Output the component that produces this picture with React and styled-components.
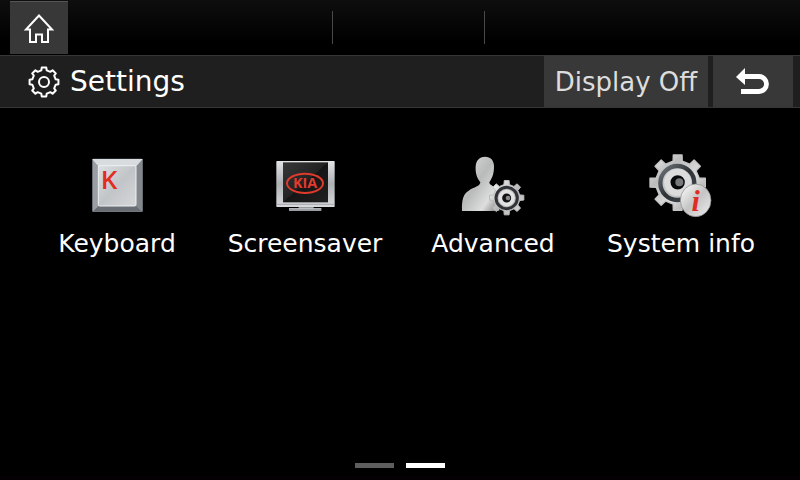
import React from "react";
import styled, { createGlobalStyle } from "styled-components";

const GlobalStyle = createGlobalStyle`
  * { box-sizing: border-box; }
  body { margin: 0; background: #000; color: #fff; font-family: "DejaVu Sans", sans-serif; }
  button { font: inherit; color: inherit; padding: 0; border: 0; }
  svg { overflow: visible; }
`;

const Screen = styled.div`
  display: flex;
  flex-direction: column;
  min-height: 100vh;
  padding-bottom: 8px;
  background: #000;
  border-bottom: 4px solid #040004;
`;

const StatusBar = styled.nav`
  display: grid;
  grid-template-columns: 322fr 152fr 316fr;
  height: 55px;
  padding: 1px 0 1px 10px;
  background: linear-gradient(#0e0e0e, #000 75%);
`;

const StatusSlot = styled.div`
  margin: 10px 0;
  border-left: 1px solid #484848;
`;

const HomeButton = styled.button`
  display: flex;
  align-items: center;
  justify-content: center;
  width: 58px;
  height: 53px;
  background: #383838;
  border-top: 1px solid #555;
`;

const Header = styled.header`
  display: flex;
  align-items: stretch;
  gap: 5px;
  height: 53px;
  padding-right: 7px;
  background: #1f1f1f;
  border-top: 1px solid #363636;
  border-bottom: 1px solid #363636;
`;

const Title = styled.h1`
  display: flex;
  flex: 1;
  align-items: center;
  gap: 10px;
  margin: 0;
  padding-left: 28px;
  font-size: 28px;
  line-height: 32px;
  font-weight: 400;
`;

const HeaderButton = styled.button`
  display: flex;
  align-items: center;
  justify-content: center;
  width: ${(p) => p.$width}px;
  background: #383838;
  color: #ddd;
  font-size: 26px;
  font-weight: 400;
  white-space: nowrap;
`;

const Menu = styled.main`
  display: grid;
  flex: 1;
  grid-template-columns: repeat(4, 1fr);
  align-items: start;
  padding: 45px 25px 0 23px;
`;

const MenuItem = styled.button`
  display: flex;
  flex-direction: column;
  align-items: center;
  gap: 10px;
  background: none;
  font-size: 25px;
  line-height: 32px;
  font-weight: 400;
  white-space: nowrap;
`;

const Pager = styled.div`
  display: flex;
  justify-content: center;
  gap: 12px;
`;

const PageMark = styled.button`
  width: 39px;
  height: 5px;
  background: ${(p) => (p.$active ? "#fff" : "#5e5e5e")};
`;

const gearPath = (cx, cy, outer, root, tip, base) => {
  const points = [];
  for (let i = 0; i < 8; i += 1) {
    [[-base, root], [-tip, outer], [tip, outer], [base, root]].forEach(([offset, r]) => {
      const a = ((i * 45 + offset - 90) * Math.PI) / 180;
      points.push(`${(cx + r * Math.cos(a)).toFixed(2)} ${(cy + r * Math.sin(a)).toFixed(2)}`);
    });
  }
  return `M${points.join("L")}Z`;
};

const HomeIcon = () => (
  <svg width="32" height="32" viewBox="0 0 32 32" fill="none" stroke="#fff" strokeWidth="2" aria-hidden="true">
    <path d="M16 3.5 L3 17.5 H7 V30 H13 V22.5 H19 V30 H25 V17.5 H29 Z" />
  </svg>
);

const SettingsIcon = () => (
  <svg width="32" height="34" viewBox="0 0 32 34" fill="none" stroke="#fff" strokeWidth="2" strokeLinejoin="round" aria-hidden="true">
    <path d={gearPath(16, 17, 14.6, 12, 9, 13)} />
    <circle cx="16" cy="17" r="5" />
  </svg>
);

const BackIcon = () => (
  <svg width="34" height="30" viewBox="0 0 34 30" aria-hidden="true">
    <path d="M0 10 L9 1 V18 Z" fill="#fff" />
    <path d="M7 9.5 H23 a7.5 7.5 0 0 1 0 15 H5" fill="none" stroke="#fff" strokeWidth="4.8" />
  </svg>
);

const KeyboardIcon = () => (
  <svg width="64" height="65" viewBox="15 24 192 195" aria-hidden="true">
    <defs>
      <linearGradient id="keyFace" x1="0" y1="0" x2="1" y2="1">
        <stop offset="0" stopColor="#dde0e3" />
        <stop offset="0.5" stopColor="#c2c5c8" />
        <stop offset="1" stopColor="#d5d6d8" />
      </linearGradient>
    </defs>
    <rect x="37" y="41" width="151" height="160" rx="4" fill="#898e94" />
    <path d="M38 42 H187 L167 64 H57 Z" fill="#d9dcdf" />
    <path d="M38 42 L57 64 V182 L38 200 Z" fill="#9a9fa5" />
    <path d="M187 42 V200 L167 182 V64 Z" fill="#83888e" />
    <path d="M38 200 L57 182 H167 L187 200 Z" fill="#696e74" />
    <rect x="55" y="62" width="113" height="121" rx="4" fill="url(#keyFace)" stroke="#eef0f2" strokeWidth="3" />
    <path d="M38 42 L57 64 M187 42 L167 64" stroke="#fff" strokeWidth="2" />
    <text x="62" y="132" fontFamily="Open Sans, sans-serif" fontSize="78" fontWeight="600" fill="#e32c20">K</text>
  </svg>
);

const ScreensaverIcon = () => (
  <svg width="64" height="65" viewBox="15 9 192 195" aria-hidden="true">
    <defs>
      <linearGradient id="bezel" x1="0" y1="0" x2="0" y2="1">
        <stop offset="0" stopColor="#e2e4e6" />
        <stop offset="0.5" stopColor="#aeb1b4" />
        <stop offset="1" stopColor="#d8dadc" />
      </linearGradient>
      <linearGradient id="panel" x1="0" y1="0" x2="1" y2="1">
        <stop offset="0" stopColor="#383838" />
        <stop offset="0.5" stopColor="#222" />
        <stop offset="0.5" stopColor="#151515" />
        <stop offset="1" stopColor="#202020" />
      </linearGradient>
    </defs>
    <path d="M92 170 H137 V175 H160 V183 H63 V175 H92 Z" fill="#989ca0" />
    <path d="M63 176 H160" stroke="#dfe1e3" strokeWidth="2" />
    <rect x="25" y="33" width="175" height="138" rx="2" fill="url(#bezel)" />
    <path d="M27 163 H198" stroke="#a5a8ac" strokeWidth="3" />
    <rect x="45" y="37" width="135" height="120" fill="url(#panel)" />
    <ellipse cx="111" cy="100" rx="54" ry="29" fill="none" stroke="#df3a2c" strokeWidth="6" />
    <text x="111" y="115" textAnchor="middle" fontFamily="Open Sans, sans-serif" fontSize="43" fontWeight="700" fill="#e23b2d">KIA</text>
  </svg>
);

const AdvancedIcon = () => (
  <svg width="64" height="65" viewBox="18 9 192 195" aria-hidden="true">
    <defs>
      <linearGradient id="person" x1="0" y1="0" x2="1" y2="1">
        <stop offset="0" stopColor="#dedfdf" />
        <stop offset="0.45" stopColor="#b9bbbb" />
        <stop offset="0.75" stopColor="#dddede" />
        <stop offset="1" stopColor="#777" />
      </linearGradient>
      <linearGradient id="smallGear" x1="0" y1="0" x2="1" y2="1">
        <stop offset="0" stopColor="#fff" />
        <stop offset="0.55" stopColor="#b5b5b5" />
        <stop offset="1" stopColor="#ddd" />
      </linearGradient>
    </defs>
    <path d="M21 183 C20 145 26 132 41 122 C57 111 76 109 76 97 C63 81 61 63 62 48 C64 28 76 20 90 20 C107 20 117 31 117 49 C117 67 114 81 103 97 C103 107 122 111 133 119 V183 Z" fill="url(#person)" />
    <path d={gearPath(155, 143, 52, 40, 8, 12)} fill="url(#smallGear)" stroke="#bbb" strokeWidth="3" strokeLinejoin="round" />
    <circle cx="155" cy="144" r="32" fill="#b9b9b9" stroke="#303438" strokeWidth="9" />
    <circle cx="155" cy="144" r="19" fill="#101214" stroke="#e2e2e2" strokeWidth="11" />
    <circle cx="159" cy="144" r="7" fill="#8a8a8a" />
  </svg>
);

const SystemInfoIcon = () => (
  <svg width="64" height="65" viewBox="18 15 192 195" aria-hidden="true">
    <defs>
      <linearGradient id="largeGear" x1="0" y1="0" x2="1" y2="1">
        <stop offset="0" stopColor="#f0f0f0" />
        <stop offset="0.3" stopColor="#bcbcbc" />
        <stop offset="0.6" stopColor="#ddd" />
        <stop offset="1" stopColor="#888" />
      </linearGradient>
      <linearGradient id="ring" x1="0" y1="0" x2="1" y2="1">
        <stop offset="0" stopColor="#70767b" />
        <stop offset="0.5" stopColor="#2e3338" />
        <stop offset="1" stopColor="#43484c" />
      </linearGradient>
      <linearGradient id="badge" x1="0" y1="0" x2="1" y2="1">
        <stop offset="0" stopColor="#fff" />
        <stop offset="0.5" stopColor="#c4c4c4" />
        <stop offset="1" stopColor="#eee" />
      </linearGradient>
    </defs>
    <path d={gearPath(104, 104, 84, 66, 9, 12)} fill="url(#largeGear)" stroke="#c5c5c5" strokeWidth="4" strokeLinejoin="round" />
    <circle cx="103" cy="105" r="51" fill="#c5c5c5" stroke="url(#ring)" strokeWidth="13" />
    <circle cx="104" cy="103" r="31" fill="#08090a" stroke="#dcdcdc" strokeWidth="19" />
    <circle cx="109" cy="103" r="12" fill="#77797b" />
    <ellipse cx="158" cy="157" rx="46" ry="49" fill="url(#badge)" stroke="#858585" strokeWidth="2" />
    <text x="158" y="188" textAnchor="middle" fontFamily="Liberation Serif, serif" fontSize="90" fontStyle="italic" fontWeight="700" fill="#df2c25">i</text>
  </svg>
);

const items = [
  { label: "Keyboard", Icon: KeyboardIcon },
  { label: "Screensaver", Icon: ScreensaverIcon },
  { label: "Advanced", Icon: AdvancedIcon },
  { label: "System info", Icon: SystemInfoIcon },
];

export default function App() {
  return (
    <Screen>
      <GlobalStyle />
      <StatusBar>
        <HomeButton aria-label="Home"><HomeIcon /></HomeButton>
        <StatusSlot />
        <StatusSlot />
      </StatusBar>
      <Header>
        <Title><SettingsIcon />Settings</Title>
        <HeaderButton $width={164}>Display Off</HeaderButton>
        <HeaderButton $width={80} aria-label="Back"><BackIcon /></HeaderButton>
      </Header>
      <Menu>
        {items.map(({ label, Icon }) => (
          <MenuItem key={label}><Icon />{label}</MenuItem>
        ))}
      </Menu>
      <Pager>
        <PageMark aria-label="Page 1" />
        <PageMark $active aria-label="Page 2" aria-current="page" />
      </Pager>
    </Screen>
  );
}
